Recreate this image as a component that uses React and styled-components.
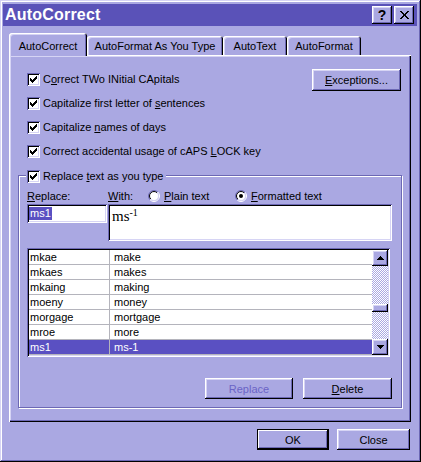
import React from 'react';
import styled, { createGlobalStyle, css } from 'styled-components';

const C = {
  face: '#aaa8e2',
  light: '#ffffff',
  hi: '#d6d4f4',
  shadow: '#6c68b4',
  dark: '#000000',
  title: '#5a52b8',
  sel: '#5a50c2',
  disabled: '#6a64c6',
  grid: '#b4b4bc',
};

const FONT = '"Liberation Sans", Arial, sans-serif';

const raised = css`
  box-shadow: inset -1px -1px 0 ${C.dark}, inset 1px 1px 0 ${C.light},
    inset -2px -2px 0 ${C.shadow}, inset 2px 2px 0 ${C.hi};
`;

const sunken = css`
  box-shadow: inset 1px 1px 0 ${C.shadow}, inset -1px -1px 0 ${C.light},
    inset 2px 2px 0 ${C.dark}, inset -2px -2px 0 ${C.hi};
`;

const GlobalStyle = createGlobalStyle`
  html, body { margin: 0; padding: 0; background: ${C.face}; }
  body { font-family: ${FONT}; font-size: 11px; color: #000; }
  #root { width: 421px; height: 462px; }
`;

const Window = styled.div`
  box-sizing: border-box;
  width: 421px;
  height: 462px;
  padding: 4px 4px 4px 3px;
  background: ${C.face};
  box-shadow: inset -1px -1px 0 ${C.dark}, inset 1px 1px 0 ${C.hi},
    inset -2px -2px 0 ${C.shadow}, inset 2px 2px 0 ${C.light};
  display: flex;
  flex-direction: column;
`;

const TitleBar = styled.div`
  height: 22px;
  flex: none;
  background: ${C.title};
  display: flex;
  align-items: center;
  justify-content: space-between;
  padding: 0 3px 0 2px;
`;

const TitleText = styled.span`
  color: #fff;
  font: bold 16px ${FONT};
  letter-spacing: 0.2px;
`;

const CaptionButtons = styled.div`
  display: flex;
  gap: 2px;
`;

const CaptionButton = styled.div`
  box-sizing: border-box;
  width: 20px;
  height: 18px;
  background: ${C.face};
  ${raised};
  display: flex;
  align-items: center;
  justify-content: center;
  font: bold 14px ${FONT};
  color: #000;
  padding-bottom: 1px;
`;

const Body = styled.div`
  display: flex;
  flex-direction: column;
  padding: 7px 0 0 6px;
`;

const TabRow = styled.div`
  display: flex;
  align-items: flex-end;
  height: 22px;
`;

const Tab = styled.div`
  box-sizing: border-box;
  width: ${(p) => p.$w}px;
  height: ${(p) => (p.$active ? 23 : 19)}px;
  margin-bottom: ${(p) => (p.$active ? -1 : 0)}px;
  position: relative;
  z-index: ${(p) => (p.$active ? 2 : 0)};
  background: ${C.face};
  border-radius: 3px 3px 0 0;
  box-shadow: inset 1px 1px 0 ${C.light}, inset -1px 0 0 ${C.dark},
    inset -2px 0 0 ${C.shadow}, inset 2px 2px 0 ${C.hi};
  display: flex;
  align-items: center;
  justify-content: center;
  padding-top: ${(p) => (p.$active ? 2 : 1)}px;
`;

const Panel = styled.div`
  box-sizing: border-box;
  width: 402px;
  height: 367px;
  position: relative;
  z-index: 1;
  background: ${C.face};
  box-shadow: inset 1px 1px 0 ${C.light}, inset -1px -1px 0 ${C.dark},
    inset -2px -2px 0 ${C.shadow}, inset 2px 2px 0 ${C.hi};
  padding: 12px 9px 0 9px;
  display: flex;
  flex-direction: column;
`;

const TopSection = styled.div`
  display: flex;
  justify-content: space-between;
  align-items: flex-start;
`;

const CheckList = styled.div`
  display: flex;
  flex-direction: column;
  padding-left: 9px;
`;

const CheckRow = styled.div`
  display: flex;
  align-items: center;
  gap: 3px;
  height: 24px;
  white-space: nowrap;
`;

const CheckBoxBox = styled.span`
  box-sizing: border-box;
  flex: none;
  width: 13px;
  height: 13px;
  background: #fff;
  ${sunken};
  display: flex;
  align-items: center;
  justify-content: center;
`;

const U = styled.span`
  text-decoration: underline;
  text-underline-offset: 1px;
`;

const Button = styled.button`
  box-sizing: border-box;
  width: ${(p) => p.$w}px;
  height: ${(p) => p.$h || 21}px;
  margin: 0;
  padding: 0;
  border: none;
  background: ${C.face};
  font: 11px ${FONT};
  color: ${(p) => (p.disabled ? C.disabled : '#000')};
  ${raised};
  display: flex;
  align-items: center;
  justify-content: center;
  ${(p) =>
    p.$default &&
    css`
      box-shadow: inset 0 0 0 1px ${C.dark}, inset -2px -2px 0 ${C.dark},
        inset 2px 2px 0 ${C.light}, inset -3px -3px 0 ${C.shadow};
    `}
`;

const ExceptionsButton = styled(Button)`
  margin-top: 2px;
  margin-right: 1px;
`;

const Group = styled.div`
  box-sizing: border-box;
  width: 384px;
  margin-top: 12px;
  border: 1px solid ${C.shadow};
  box-shadow: inset 1px 1px 0 ${C.light}, 1px 1px 0 ${C.light};
  padding: 0 8px 8px 8px;
  display: flex;
  flex-direction: column;
`;

const Legend = styled.div`
  display: flex;
  align-items: center;
  gap: 3px;
  height: 24px;
  margin: -12px 0 0 -1px;
  padding: 0 3px 0 1px;
  width: fit-content;
  background: ${C.face};
  white-space: nowrap;
`;

const LabelRow = styled.div`
  display: flex;
  align-items: center;
  height: 16px;
  white-space: nowrap;
`;

const LabelCell = styled.div`
  width: ${(p) => p.$w}px;
  flex: none;
  display: flex;
  align-items: center;
`;

const RadioOption = styled.div`
  width: ${(p) => p.$w}px;
  flex: none;
  display: flex;
  align-items: center;
  gap: 4px;
`;

const InputRow = styled.div`
  display: flex;
  align-items: flex-start;
  gap: 1px;
`;

const ReplaceField = styled.div`
  box-sizing: border-box;
  width: 80px;
  height: 19px;
  background: #fff;
  ${sunken};
  padding: 3px 2px 0 2px;
  display: flex;
  align-items: flex-start;
`;

const Selection = styled.span`
  background: ${C.sel};
  color: #fff;
  line-height: 13px;
  padding: 0 1px;
`;

const WithField = styled.div`
  box-sizing: border-box;
  width: 284px;
  height: 37px;
  background: #fff;
  ${sunken};
  padding: 4px 4px 0 4px;
  font: 15px "Liberation Serif", "Times New Roman", serif;
  line-height: 17px;
`;

const Sup = styled.sup`
  font-size: 10px;
  vertical-align: 5px;
  line-height: 0;
`;

const List = styled.div`
  box-sizing: border-box;
  width: 363px;
  height: 109px;
  margin-top: 7px;
  background: #fff;
  ${sunken};
  padding: 2px;
  display: flex;
`;

const Rows = styled.div`
  flex: 1;
  display: flex;
  flex-direction: column;
`;

const Row = styled.div`
  box-sizing: border-box;
  height: 15px;
  display: flex;
  border-bottom: 1px solid ${C.grid};
  background: ${(p) => (p.$selected ? C.sel : '#fff')};
  color: ${(p) => (p.$selected ? '#fff' : '#000')};
  line-height: 14px;
  white-space: nowrap;
`;

const Cell = styled.div`
  box-sizing: border-box;
  width: ${(p) => (p.$w ? `${p.$w}px` : 'auto')};
  flex: ${(p) => (p.$w ? 'none' : '1')};
  padding-left: ${(p) => p.$pad}px;
  border-right: ${(p) => (p.$sep ? `1px solid ${C.grid}` : 'none')};
`;

const ScrollBar = styled.div`
  width: 16px;
  flex: none;
  display: flex;
  flex-direction: column;
`;

const ScrollButton = styled.div`
  box-sizing: border-box;
  width: 16px;
  height: ${(p) => p.$h || 16}px;
  flex: none;
  background: ${C.face};
  ${raised};
  display: flex;
  align-items: center;
  justify-content: center;
`;

const Track = styled.div`
  flex: ${(p) => (p.$fixed ? 'none' : '1')};
  height: ${(p) => (p.$fixed ? `${p.$fixed}px` : 'auto')};
  background-color: #fff;
  background-image: repeating-conic-gradient(${C.face} 0 25%, #fff 0 50%);
  background-size: 2px 2px;
`;

const GroupButtons = styled.div`
  display: flex;
  justify-content: flex-end;
  gap: 10px;
  margin-top: 21px;
  margin-right: 1px;
`;

const Footer = styled.div`
  display: flex;
  justify-content: flex-end;
  gap: 8px;
  margin-top: 7px;
  padding-right: 7px;
`;

const CHECK_PIXELS = [
  [6, 0],
  [5, 1], [6, 1],
  [0, 2], [4, 2], [5, 2], [6, 2],
  [0, 3], [1, 3], [3, 3], [4, 3], [5, 3],
  [0, 4], [1, 4], [2, 4], [3, 4], [4, 4],
  [1, 5], [2, 5], [3, 5],
  [2, 6],
];

const CheckMark = () => (
  <svg width="7" height="7" viewBox="0 0 7 7" shapeRendering="crispEdges">
    {CHECK_PIXELS.map(([x, y]) => (
      <rect key={`${x}-${y}`} x={x} y={y} width="1" height="1" fill="#000" />
    ))}
  </svg>
);

const CheckBox = () => (
  <CheckBoxBox>
    <CheckMark />
  </CheckBoxBox>
);

const Radio = ({ checked, id }) => (
  <svg width="12" height="12" viewBox="0 0 12 12" style={{ flex: 'none' }}>
    <defs>
      <linearGradient id={`o${id}`} x1="0" y1="0" x2="1" y2="1">
        <stop offset="0.5" stopColor={C.shadow} />
        <stop offset="0.5" stopColor={C.light} />
      </linearGradient>
      <linearGradient id={`i${id}`} x1="0" y1="0" x2="1" y2="1">
        <stop offset="0.5" stopColor={C.dark} />
        <stop offset="0.5" stopColor={C.hi} />
      </linearGradient>
    </defs>
    <circle cx="6" cy="6" r="5.5" fill="none" stroke={`url(#o${id})`} strokeWidth="1" />
    <circle cx="6" cy="6" r="4.5" fill="#fff" stroke={`url(#i${id})`} strokeWidth="1" />
    {checked && <circle cx="6" cy="6" r="2" fill="#000" />}
  </svg>
);

const CloseGlyph = () => (
  <svg width="9" height="8" viewBox="0 0 9 8" shapeRendering="crispEdges">
    <path d="M0 0h2l2.5 2.8L7 0h2L5.5 4L9 8H7L4.5 5.2L2 8H0l3.5-4z" fill="#000" />
  </svg>
);

const Arrow = ({ down }) => (
  <svg width="7" height="4" viewBox="0 0 7 4" shapeRendering="crispEdges">
    <path d={down ? 'M0 0h7L3.5 4z' : 'M3.5 0L7 4H0z'} fill="#000" />
  </svg>
);

const entries = [
  ['mkae', 'make'],
  ['mkaes', 'makes'],
  ['mkaing', 'making'],
  ['moeny', 'money'],
  ['morgage', 'mortgage'],
  ['mroe', 'more'],
  ['ms1', 'ms-1'],
];

export default function App() {
  return (
    <>
      <GlobalStyle />
      <Window>
        <TitleBar>
          <TitleText>AutoCorrect</TitleText>
          <CaptionButtons>
            <CaptionButton>?</CaptionButton>
            <CaptionButton>
              <CloseGlyph />
            </CaptionButton>
          </CaptionButtons>
        </TitleBar>
        <Body>
          <TabRow>
            <Tab $active $w={78}>AutoCorrect</Tab>
            <Tab $w={136}>AutoFormat As You Type</Tab>
            <Tab $w={64}>AutoText</Tab>
            <Tab $w={74}>AutoFormat</Tab>
          </TabRow>
          <Panel>
            <TopSection>
              <CheckList>
                <CheckRow>
                  <CheckBox />
                  <span>C<U>o</U>rrect TWo INitial CApitals</span>
                </CheckRow>
                <CheckRow>
                  <CheckBox />
                  <span>Capitalize first letter of <U>s</U>entences</span>
                </CheckRow>
                <CheckRow>
                  <CheckBox />
                  <span>Capitalize <U>n</U>ames of days</span>
                </CheckRow>
                <CheckRow>
                  <CheckBox />
                  <span>Correct accidental usage of cAPS <U>L</U>OCK key</span>
                </CheckRow>
              </CheckList>
              <ExceptionsButton $w={89} $h={22}>
                <span><U>E</U>xceptions...</span>
              </ExceptionsButton>
            </TopSection>
            <Group>
              <Legend>
                <CheckBox />
                <span>Replace <U>t</U>ext as you type</span>
              </Legend>
              <LabelRow>
                <LabelCell $w={81}>
                  <span><U>R</U>eplace:</span>
                </LabelCell>
                <LabelCell $w={40}>
                  <span><U>W</U>ith:</span>
                </LabelCell>
                <RadioOption $w={87}>
                  <Radio id="plain" />
                  <span><U>P</U>lain text</span>
                </RadioOption>
                <RadioOption $w={100}>
                  <Radio id="fmt" checked />
                  <span><U>F</U>ormatted text</span>
                </RadioOption>
              </LabelRow>
              <InputRow>
                <ReplaceField>
                  <Selection>ms1</Selection>
                </ReplaceField>
                <WithField>
                  ms<Sup>-1</Sup>
                </WithField>
              </InputRow>
              <List>
                <Rows>
                  {entries.map(([from, to], i) => (
                    <Row key={from} $selected={i === entries.length - 1}>
                      <Cell $w={81} $pad={1} $sep>
                        {from}
                      </Cell>
                      <Cell $pad={4}>{to}</Cell>
                    </Row>
                  ))}
                </Rows>
                <ScrollBar>
                  <ScrollButton>
                    <Arrow />
                  </ScrollButton>
                  <Track $fixed={38} />
                  <ScrollButton $h={8} />
                  <Track />
                  <ScrollButton>
                    <Arrow down />
                  </ScrollButton>
                </ScrollBar>
              </List>
              <GroupButtons>
                <Button $w={88} disabled>
                  Replace
                </Button>
                <Button $w={89}>
                  <span><U>D</U>elete</span>
                </Button>
              </GroupButtons>
            </Group>
          </Panel>
          <Footer>
            <Button $w={72} $default>
              OK
            </Button>
            <Button $w={73}>Close</Button>
          </Footer>
        </Body>
      </Window>
    </>
  );
}
